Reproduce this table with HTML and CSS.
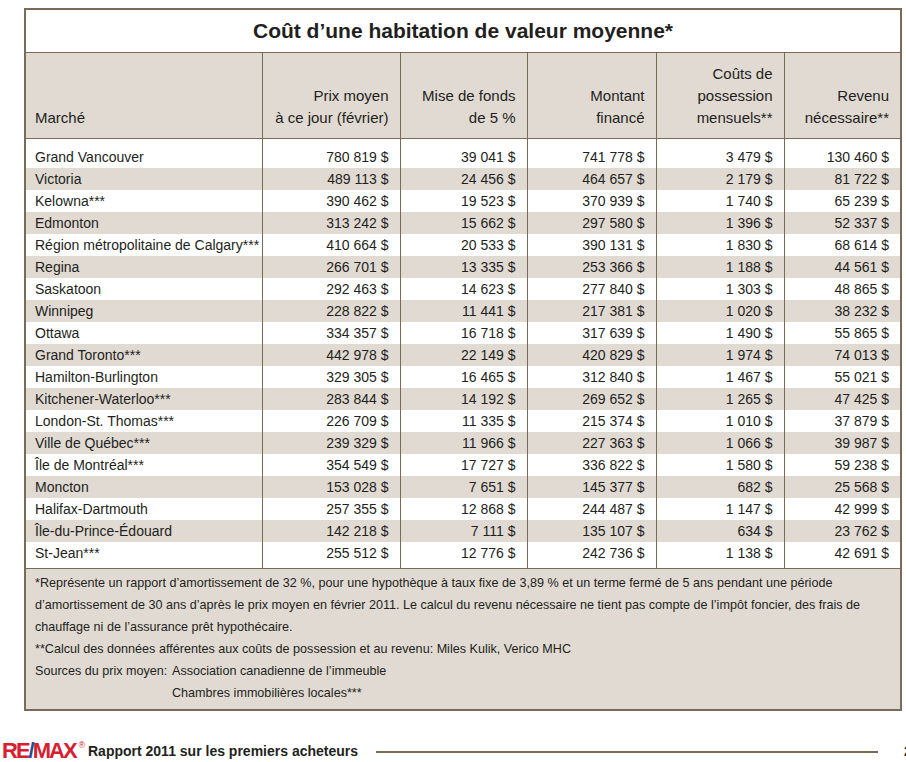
FILE: index.html
```html
<!DOCTYPE html>
<html lang="fr">
<head>
<meta charset="utf-8">
<title>Coût d’une habitation de valeur moyenne</title>
<link rel="stylesheet" href="styles.css">
</head>
<body>
<div class="page">
  <section class="frame">
    <h1 class="title">Coût d’une habitation de valeur moyenne*</h1>
    <table class="data">
      <colgroup>
        <col class="c1"><col class="c2"><col class="c3"><col class="c4"><col class="c5"><col class="c6">
      </colgroup>
      <thead>
        <tr>
          <th>Marché</th>
          <th>Prix moyen<br>à ce jour (février)</th>
          <th>Mise de fonds<br>de 5 %</th>
          <th>Montant<br>financé</th>
          <th>Coûts de<br>possession<br>mensuels**</th>
          <th>Revenu<br>nécessaire**</th>
        </tr>
      </thead>
      <tbody>
        <tr><td>Grand Vancouver</td><td>780 819 $</td><td>39 041 $</td><td>741 778 $</td><td>3 479 $</td><td>130 460 $</td></tr>
        <tr><td>Victoria</td><td>489 113 $</td><td>24 456 $</td><td>464 657 $</td><td>2 179 $</td><td>81 722 $</td></tr>
        <tr><td>Kelowna***</td><td>390 462 $</td><td>19 523 $</td><td>370 939 $</td><td>1 740 $</td><td>65 239 $</td></tr>
        <tr><td>Edmonton</td><td>313 242 $</td><td>15 662 $</td><td>297 580 $</td><td>1 396 $</td><td>52 337 $</td></tr>
        <tr><td>Région métropolitaine de Calgary***</td><td>410 664 $</td><td>20 533 $</td><td>390 131 $</td><td>1 830 $</td><td>68 614 $</td></tr>
        <tr><td>Regina</td><td>266 701 $</td><td>13 335 $</td><td>253 366 $</td><td>1 188 $</td><td>44 561 $</td></tr>
        <tr><td>Saskatoon</td><td>292 463 $</td><td>14 623 $</td><td>277 840 $</td><td>1 303 $</td><td>48 865 $</td></tr>
        <tr><td>Winnipeg</td><td>228 822 $</td><td>11 441 $</td><td>217 381 $</td><td>1 020 $</td><td>38 232 $</td></tr>
        <tr><td>Ottawa</td><td>334 357 $</td><td>16 718 $</td><td>317 639 $</td><td>1 490 $</td><td>55 865 $</td></tr>
        <tr><td>Grand Toronto***</td><td>442 978 $</td><td>22 149 $</td><td>420 829 $</td><td>1 974 $</td><td>74 013 $</td></tr>
        <tr><td>Hamilton-Burlington</td><td>329 305 $</td><td>16 465 $</td><td>312 840 $</td><td>1 467 $</td><td>55 021 $</td></tr>
        <tr><td>Kitchener-Waterloo***</td><td>283 844 $</td><td>14 192 $</td><td>269 652 $</td><td>1 265 $</td><td>47 425 $</td></tr>
        <tr><td>London-St. Thomas***</td><td>226 709 $</td><td>11 335 $</td><td>215 374 $</td><td>1 010 $</td><td>37 879 $</td></tr>
        <tr><td>Ville de Québec***</td><td>239 329 $</td><td>11 966 $</td><td>227 363 $</td><td>1 066 $</td><td>39 987 $</td></tr>
        <tr><td>Île de Montréal***</td><td>354 549 $</td><td>17 727 $</td><td>336 822 $</td><td>1 580 $</td><td>59 238 $</td></tr>
        <tr><td>Moncton</td><td>153 028 $</td><td>7 651 $</td><td>145 377 $</td><td>682 $</td><td>25 568 $</td></tr>
        <tr><td>Halifax-Dartmouth</td><td>257 355 $</td><td>12 868 $</td><td>244 487 $</td><td>1 147 $</td><td>42 999 $</td></tr>
        <tr><td>Île-du-Prince-Édouard</td><td>142 218 $</td><td>7 111 $</td><td>135 107 $</td><td>634 $</td><td>23 762 $</td></tr>
        <tr><td>St-Jean***</td><td>255 512 $</td><td>12 776 $</td><td>242 736 $</td><td>1 138 $</td><td>42 691 $</td></tr>
      </tbody>
    </table>
    <div class="notes">
      <p>*Représente un rapport d’amortissement de 32 %, pour une hypothèque à taux fixe de 3,89 % et un terme fermé de 5 ans pendant une période<br>d’amortissement de 30 ans d’après le prix moyen en février 2011. Le calcul du revenu nécessaire ne tient pas compte de l’impôt foncier, des frais de<br>chauffage ni de l’assurance prêt hypothécaire.</p>
      <p>**Calcul des données afférentes aux coûts de possession et au revenu: Miles Kulik, Verico MHC</p>
      <div class="sources">
        <span class="src-label">Sources du prix moyen:</span>
        <span class="src-list">Association canadienne de l’immeuble<br>Chambres immobilières locales***</span>
      </div>
    </div>
  </section>
  <footer class="footer">
    <div class="logo"><span class="logo-word"><span class="red">RE</span><span class="blue">/</span><span class="red">MAX</span></span><span class="reg">®</span></div>
    <span class="report">Rapport 2011 sur les premiers acheteurs</span>
    <span class="rule"></span>
    <span class="pagenum">2</span>
  </footer>
</div>
</body>
</html>
```
FILE: styles.css
```css
html, body {
  margin: 0;
  padding: 0;
  overflow: hidden;
  background: #ffffff;
}

body {
  font-family: "Liberation Sans", Arial, sans-serif;
  color: #231f20;
}

.page {
  width: 906px;
  height: 762px;
  overflow: hidden;
}

.frame {
  margin: 8px 0 0 24px;
  width: 874px;
  border: 2px solid #7b6a55;
}

.title {
  margin: 0;
  height: 42px;
  line-height: 42px;
  font-size: 21px;
  font-weight: bold;
  text-align: center;
  border-bottom: 1px solid #7b6a55;
  color: #231f20;
}

.data {
  width: 874px;
  border-collapse: collapse;
  table-layout: fixed;
}

.c1 { width: 236px; }
.c2 { width: 138px; }
.c3 { width: 127px; }
.c4 { width: 129px; }
.c5 { width: 128px; }
.c6 { width: 116px; }

.data th,
.data td {
  border-left: 1px solid #7b6a55;
  text-align: right;
  padding: 0 11px 0 6px;
  white-space: nowrap;
}

.data th:first-child,
.data td:first-child {
  border-left: none;
  text-align: left;
  padding-left: 9px;
}

.data thead th {
  background: #e0dad3;
  font-weight: normal;
  font-size: 15px;
  line-height: 22px;
  vertical-align: bottom;
  padding-top: 10px;
  padding-bottom: 9px;
  border-bottom: 1px solid #7b6a55;
}

.data tbody td {
  font-size: 14px;
  line-height: 22px;
  height: 22px;
  padding-top: 0;
  padding-bottom: 0;
}

.data tbody tr:nth-child(even) td {
  background: #e0dad3;
}

.data tbody tr:first-child td {
  padding-top: 7px;
}

.data tbody tr:last-child td {
  padding-bottom: 4px;
}

.notes {
  border-top: 1px solid #7b6a55;
  background: #e0dad3;
  padding: 3px 9px 5px;
  font-size: 12.6px;
  line-height: 22px;
  white-space: nowrap;
}

.notes p {
  margin: 0;
}

.sources {
  display: flex;
}

.src-label {
  width: 137px;
  flex: none;
}

.footer {
  display: flex;
  align-items: center;
  height: 22px;
  margin-top: 29px;
  padding-left: 2px;
  white-space: nowrap;
}

.logo {
  display: flex;
  align-items: flex-start;
  width: 86px;
  flex: none;
  height: 22px;
}

.logo-word {
  font-size: 22px;
  font-weight: bold;
  line-height: 22px;
  letter-spacing: -2px;
}

.red { color: #d6202f; }
.blue { color: #1c4fa0; }

.reg {
  font-size: 9px;
  color: #d6202f;
  line-height: 10px;
  margin-left: 3px;
}

.report {
  font-size: 14px;
  font-weight: bold;
  line-height: 18px;
  color: #231f20;
}

.rule {
  flex: none;
  width: 502px;
  height: 2px;
  background: #7b6a55;
  margin-left: 18px;
  margin-top: 2px;
}

.pagenum {
  flex: none;
  margin-left: 26px;
  font-size: 14px;
  font-weight: bold;
  line-height: 18px;
}
```
